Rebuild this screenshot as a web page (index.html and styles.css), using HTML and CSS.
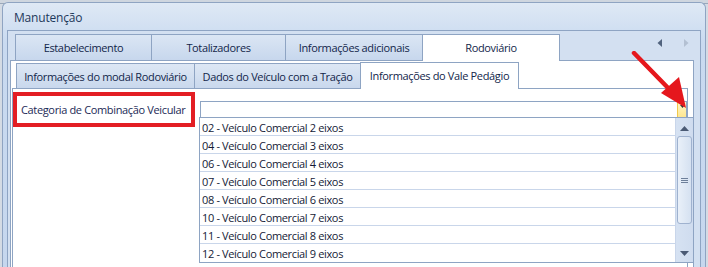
FILE: index.html
```html
<!DOCTYPE html>
<html lang="pt">
<head>
<meta charset="utf-8">
<title>Manutenção</title>
<link rel="stylesheet" href="styles.css">
</head>
<body>
<div class="desk"></div>
<div class="window">
  <div class="title">Manutenção</div>
  <div class="tabctl">
    <div class="tabstrip">
      <div class="tab">Estabelecimento</div>
      <div class="tab">Totalizadores</div>
      <div class="tab">Informações adicionais</div>
      <div class="tab active">Rodoviário</div>
      <div class="navs">
        <svg width="8" height="10" viewBox="0 0 8 10"><path d="M6 1 L1.5 5 L6 9 Z" fill="#51637e"/></svg>
        <svg width="8" height="10" viewBox="0 0 8 10"><path d="M2 1 L6.5 5 L2 9 Z" fill="#b3c0d2"/></svg>
      </div>
    </div>
    <div class="page">
      <div class="subctl">
        <div class="substrip">
          <div class="stab s1">Informações do modal Rodoviário</div>
          <div class="stab s2">Dados do Veículo com a Tração</div>
          <div class="stab s3 active">Informações do Vale Pedágio</div>
        </div>
        <div class="subpage">
          <div class="row">
            <div class="label">Categoria de Combinação Veicular</div>
            <div class="combo">
              <div class="combo-btn"><svg width="5" height="3" viewBox="0 0 5 3"><path d="M0 0 H5 L2.5 3 Z" fill="#333"/></svg></div>
            </div>
          </div>
        </div>
      </div>
    </div>
  </div>
  <div class="dropdown">
    <ul class="items">
      <li>02 - Veículo Comercial 2 eixos</li>
      <li>04 - Veículo Comercial 3 eixos</li>
      <li>06 - Veículo Comercial 4 eixos</li>
      <li>07 - Veículo Comercial 5 eixos</li>
      <li>08 - Veículo Comercial 6 eixos</li>
      <li>10 - Veículo Comercial 7 eixos</li>
      <li>11 - Veículo Comercial 8 eixos</li>
      <li>12 - Veículo Comercial 9 eixos</li>
    </ul>
    <div class="vscroll">
      <div class="arrow up"><svg width="9" height="5" viewBox="0 0 9 5"><path d="M0 5 L4.5 0 L9 5 Z" fill="#4a5a74"/></svg></div>
      <div class="thumb"><span class="grip"></span></div>
      <div class="arrow down"><svg width="9" height="5" viewBox="0 0 9 5"><path d="M0 0 L9 0 L4.5 5 Z" fill="#4a5a74"/></svg></div>
    </div>
  </div>
  <svg class="pointer" width="70" height="70" viewBox="0 0 70 70">
    <line x1="3" y1="2" x2="40" y2="40" stroke="#e5171d" stroke-width="4.5" stroke-linecap="round"/>
    <path d="M30 42 L48 26 L55 57 Z" fill="#e5171d"/>
  </svg>
</div>
</body>
</html>
```
FILE: styles.css
```css
* { box-sizing: border-box; }
html, body { margin: 0; padding: 0; }
body {
  width: 708px; height: 267px; overflow: hidden;
  background: #d4dbe4;
  font-family: "Segoe UI", "Open Sans", sans-serif;
  font-size: 11px;
  letter-spacing: -0.35px;
  color: #1e395b;
}
.desk { height: 4px; background: #cfd6df; border-bottom: 1px solid #9aa8ba; }
.window {
  position: relative;
  margin: -2px 2px 0 2px;
  height: 265px;
  border: 1px solid #8fa4c2;
  border-bottom: none;
  border-radius: 6px 6px 0 0;
  background: linear-gradient(#dfe9f5, #c9daf0 40px, #c6d7ee);
  padding: 0 4px;
  display: flex; flex-direction: column;
  overflow: hidden;
}
.title {
  flex: 0 0 27px;
  padding: 6px 0 0 7px;
  font-size: 12px;
  letter-spacing: -0.2px;
  color: #1e395b;
}
.tabctl {
  flex: 1 1 auto; min-height: 0;
  border: 1px solid #8ea4c3;
  border-bottom: none;
  background: #d3e0f1;
  display: flex; flex-direction: column;
  padding: 1px 6px 0 2px;
}
.tabstrip { flex: 0 0 28px; display: flex; align-items: flex-end; padding-left: 5px; }
.tab {
  height: 26px; width: 136px;
  border: 1px solid #8ea4c3; border-bottom: none; border-right: none;
  background: linear-gradient(#dbe6f4, #c7d7ed);
  color: #12264a;
  display: flex; align-items: center; justify-content: center;
}
.tab:nth-child(2) { width: 134px; }
.tab:nth-child(3) { width: 137px; }
.tab.active {
  width: 138px; height: 27px; background: #fff;
  border-right: 1px solid #8ea4c3;
  position: relative; top: 1px;
  padding-bottom: 2px;
}
.navs { margin-left: auto; display: flex; gap: 18px; align-self: flex-start; margin-top: 6px; margin-right: 4px; }
.page {
  flex: 1 1 auto; min-height: 0;
  background: #fff;
  border: 1px solid #8ea4c3; border-bottom: none;
  padding: 0 5px 0 1px;
}
.subctl { display: flex; flex-direction: column; }
.substrip { flex: 0 0 27px; display: flex; align-items: flex-end; padding-left: 4px; }
.stab {
  height: 25px; border: 1px solid #8ea4c3; border-bottom: none; border-right: none;
  background: linear-gradient(#dde7f4, #c9d8ed);
  color: #12264a;
  display: flex; align-items: center; justify-content: center;
}
.s1 { width: 178px; }
.s2 { width: 166px; }
.s3.active { width: 159px; height: 27px; background: #fff; border-right: 1px solid #8ea4c3; position: relative; top: 1px; padding-bottom: 2px; }
.subpage {
  height: 190px;
  border: 1px solid #8ea4c3; border-bottom: none;
  padding: 3px 0 0 0;
}
.row { display: flex; align-items: flex-start; }
.label {
  width: 182px; height: 35px;
  border: 4px solid #e31e24;
  display: flex; align-items: center;
  padding-left: 4px;
  white-space: nowrap;
  color: #1b2a56;
}
.combo {
  margin: 9px 0 0 5px;
  width: 487px; height: 19px;
  border: 1px solid #8ea4c3;
  background: #fff;
  position: relative;
}
.combo-btn {
  position: absolute; right: 0; top: 0; bottom: 0; width: 9px;
  background: linear-gradient(#fff6c8, #fde48a);
  border-left: 1px solid #f1c84c;
  display: flex; justify-content: flex-end; padding: 3px 1px 0 0;
}
.combo-btn svg { display: block; }
.dropdown {
  position: absolute; left: 196px; top: 114px;
  width: 495px; height: 146px;
  border: 1px solid #8ea4c3;
  background: #fff;
  display: flex;
}
.items { list-style: none; margin: 0; padding: 0; flex: 1; }
.items li {
  height: 18px; border-bottom: 1px solid #c9d6ea;
  padding: 2px 0 0 2px;
  color: #141a36;
  line-height: 15px;
  white-space: nowrap;
}
.items li:last-child { border-bottom: none; }
.vscroll {
  width: 18px;
  background: linear-gradient(90deg, #d6e2f2, #cfdcef);
  border-left: 1px solid #c9d6ea;
  display: flex; flex-direction: column; align-items: center;
}
.arrow { display: flex; align-items: center; justify-content: center; }
.arrow.up { height: 18px; padding-top: 2px; }
.thumb {
  width: 15px; height: 88px;
  border: 1px solid #9fb2cf; border-radius: 3px;
  background: linear-gradient(90deg, #e9f0f9, #d5e1f1);
  display: flex; align-items: center; justify-content: center;
}
.grip { width: 7px; height: 5px; border-top: 1px solid #6d7f9a; border-bottom: 1px solid #6d7f9a; position: relative; }
.grip::after { content: ""; position: absolute; left: 0; right: 0; top: 1px; border-top: 1px solid #6d7f9a; }
.arrow.down { margin-top: auto; height: 16px; padding-bottom: 2px; }
.pointer { position: absolute; left: 628px; top: 48px; }
```
